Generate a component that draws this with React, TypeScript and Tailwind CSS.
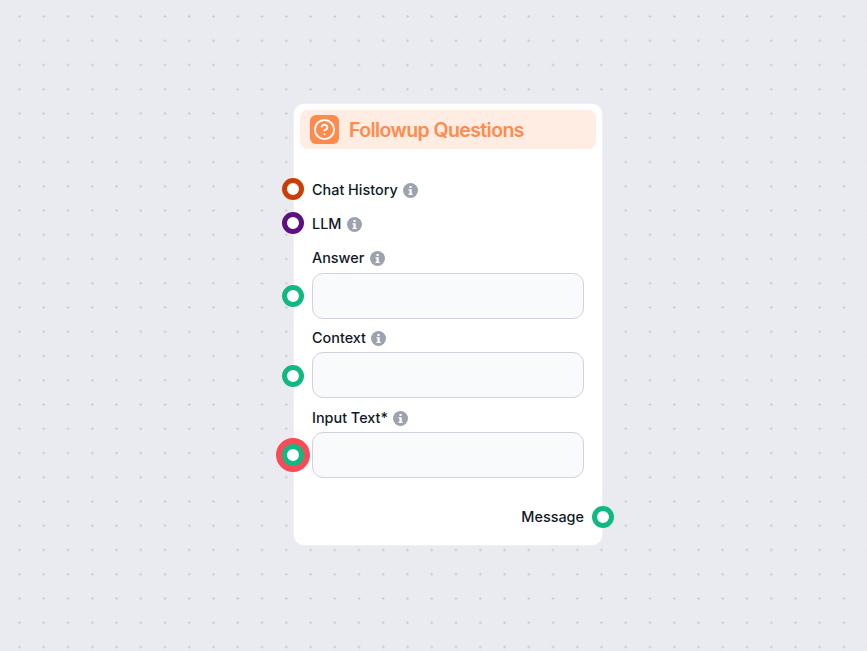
import React from "react";

function Info() {
  return (
    <svg width="15" height="15" viewBox="0 0 15 15" className="shrink-0">
      <circle cx="7.5" cy="7.5" r="7.5" fill="#9ca3af" />
      <rect x="6.4" y="2.9" width="2.3" height="2.1" rx="0.4" fill="#fff" />
      <path d="M5.5 6.2h3.2v4.5h1v1.4H5.5v-1.4h1V7.6h-1z" fill="#fff" />
    </svg>
  );
}

function Handle({ color, ring = false, side = "left", shift = "" }: { color: string; ring?: boolean; side?: "left" | "right"; shift?: string }) {
  const place = side === "left" ? "left-[-12px]" : "right-[-12px]";
  return (
    <span className={`absolute ${place} top-1/2 -translate-y-1/2 w-[22px] h-[22px] rounded-full border-[5px] bg-white ${color} ${shift} ${ring ? "shadow-[0_0_0_6px_#f94a58]" : ""}`} />
  );
}

function Label({ text }: { text: string }) {
  return (
    <div className="flex items-center gap-[5.5px] h-5 text-[14.4px] font-medium leading-5 text-[#111827]">
      <span>{text}</span>
      <span className="pt-[1px]"><Info /></span>
    </div>
  );
}

function Field({ label, ring, gap, after, shift }: { label: string; ring?: boolean; gap: string; after: string; shift?: string }) {
  return (
    <div className={after}>
      <div className="px-[18px]">
        <Label text={label} />
      </div>
      <div className={`relative ${gap} h-[46px] px-[18px]`}>
        <Handle color="border-[#10b981]" ring={ring} shift={shift} />
        <div className="h-[46px] rounded-[11px] border border-[#cfd3dc] bg-[#f9fafb]" />
      </div>
    </div>
  );
}

export default function App() {
  return (
    <div
      className="relative w-[867px] h-[651px] overflow-hidden bg-[#e9ebf0] bg-[radial-gradient(circle,#cbced4_1px,transparent_1.4px)] bg-[size:24.25px_24.25px] bg-[position:7.4px_4.4px] font-['Inter',sans-serif]"
    >
      <div className="absolute left-[294px] top-[104px] w-[308px] h-[441px] rounded-[10px] bg-white shadow-[0_0_0_1px_#eef0f3] p-[6px]">
        <div className="flex items-center gap-[10px] h-[39px] rounded-lg bg-[#ffede4] px-[10px]">
          <span className="flex items-center justify-center w-[29px] h-[29px] rounded-md bg-[#ff8a4c]">
            <svg width="23" height="23" viewBox="0 0 24 24" fill="none" stroke="#fff" strokeWidth="2" strokeLinecap="round" strokeLinejoin="round">
              <circle cx="12" cy="12" r="10" />
              <path d="M9.09 9a3 3 0 0 1 5.83 1c0 2-3 3-3 3" />
              <path d="M12 17h.01" />
            </svg>
          </span>
          <span className="text-[19.5px] pt-[2px] font-semibold leading-none tracking-[-0.6px] text-[#ff8a4c]">Followup Questions</span>
        </div>
        <div className="-mx-[6px] pt-[31px]">
          <div className="relative px-[18px] mb-[14px]">
            <Handle color="border-[#cc3d06]" shift="mt-[-1px]" />
            <Label text="Chat History" />
          </div>
          <div className="relative px-[18px] mb-[14px]">
            <Handle color="border-[#5f0f7f]" shift="mt-[-1px]" />
            <Label text="LLM" />
          </div>
          <Field label="Answer" gap="mt-[5px]" after="mb-[9px]" />
          <Field label="Context" gap="mt-[4px]" after="mb-[10px]" shift="mt-[1px]" />
          <Field label="Input Text*" ring gap="mt-[4px]" after="" />
          <div className="relative mt-[29px] flex justify-end px-[18px] h-5 items-center text-[14.4px] font-medium text-[#111827]">
            <span>Message</span>
            <Handle color="border-[#10b981]" side="right" />
          </div>
        </div>
      </div>
    </div>
  );
}
